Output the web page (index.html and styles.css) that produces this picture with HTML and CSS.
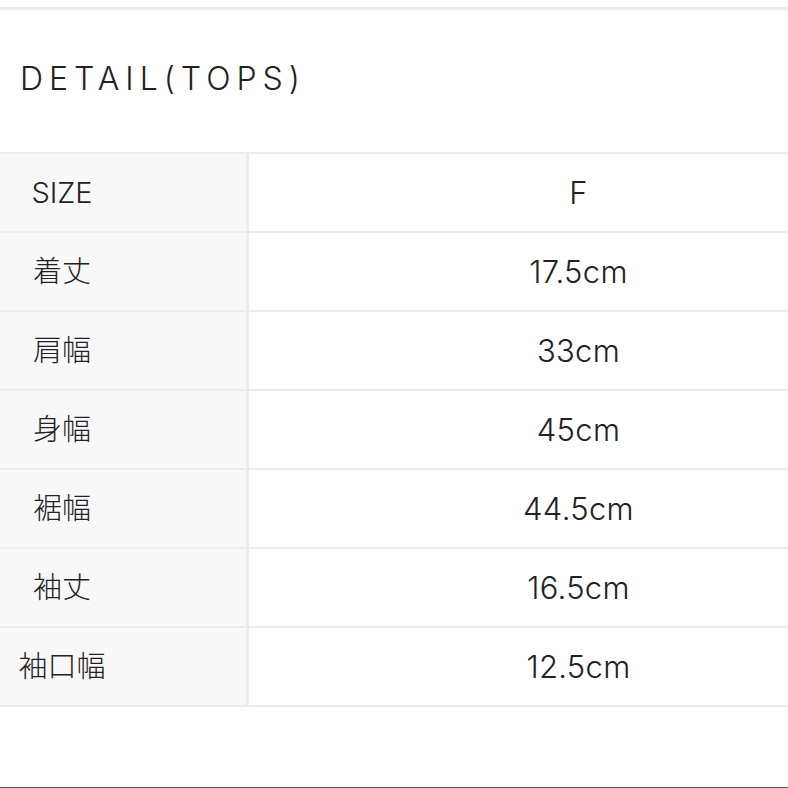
FILE: index.html
```html
<!DOCTYPE html>
<html lang="ja">
<head>
<meta charset="utf-8">
<title>DETAIL(TOPS)</title>
<link rel="stylesheet" href="styles.css">
</head>
<body>
<div class="page">
  <div class="top-rule"></div>
  <h2 class="title">DETAIL(TOPS)</h2>
  <table class="spec">
    <tbody>
      <tr><th>SIZE</th><td>F</td></tr>
      <tr><th>着丈</th><td>17.5cm</td></tr>
      <tr><th>肩幅</th><td>33cm</td></tr>
      <tr><th>身幅</th><td>45cm</td></tr>
      <tr><th>裾幅</th><td>44.5cm</td></tr>
      <tr><th>袖丈</th><td>16.5cm</td></tr>
      <tr><th>袖口幅</th><td>12.5cm</td></tr>
    </tbody>
  </table>
</div>
</body>
</html>
```
FILE: styles.css
```css
html, body {
  margin: 0;
  padding: 0;
  background: #ffffff;
}
.page {
  box-sizing: border-box;
  height: 788px;
  width: 788px;
  overflow: hidden;
  padding-top: 7px;
  border-bottom: 1px solid #555555;
  color: #222222;
  font-family: "Inter", "Noto Sans CJK JP", sans-serif;
}
.top-rule {
  height: 0;
  border-top: 3px solid #eeeeee;
}
.title {
  margin: 0;
  height: 142px;
  box-sizing: border-box;
  padding: 49px 0 0 20px;
  font-size: 32px;
  line-height: 40px;
  font-weight: 300;
  letter-spacing: 6px;
}
.spec {
  width: 100%;
  border-collapse: collapse;
  table-layout: fixed;
}
.spec tr {
  height: 79px;
}
.spec th,
.spec td {
  border-top: 2px solid #ececec;
  border-bottom: 2px solid #ececec;
  font-size: 29px;
  font-weight: 300;
  line-height: 36px;
  padding: 0;
  vertical-align: middle;
  text-align: center;
}
.spec th {
  width: 124px;
  padding-right: 122px;
  background: #f8f8f8;
  border-right: 3px solid #ececec;
}
.spec td {
  padding-left: 120px;
  background: #ffffff;
  font-size: 31px;
  letter-spacing: 0.3px;
}
```
